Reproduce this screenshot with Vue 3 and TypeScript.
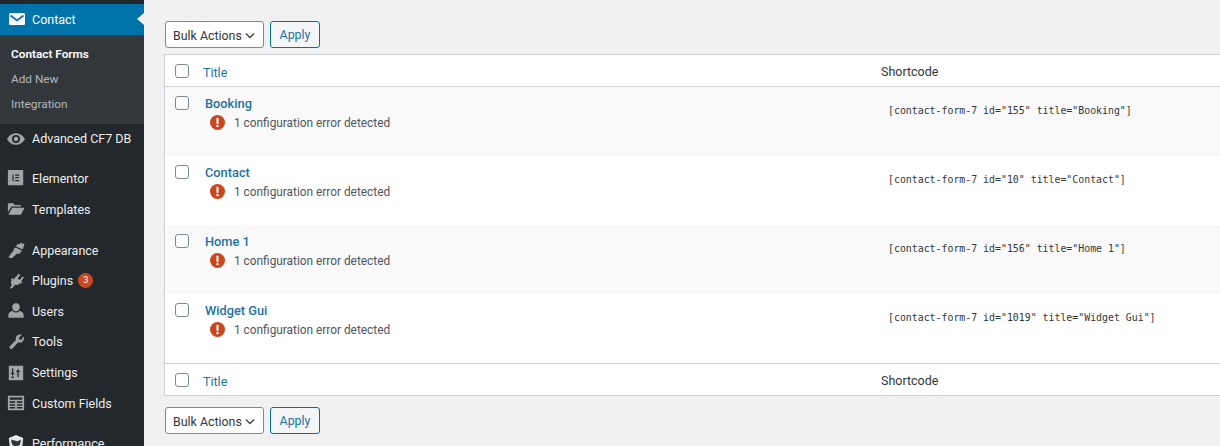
<script setup lang="ts">
const forms = [
  { title: 'Booking', code: '[contact-form-7 id="155" title="Booking"]' },
  { title: 'Contact', code: '[contact-form-7 id="10" title="Contact"]' },
  { title: 'Home 1', code: '[contact-form-7 id="156" title="Home 1"]' },
  { title: 'Widget Gui', code: '[contact-form-7 id="1019" title="Widget Gui"]' },
]
</script>

<template>
  <div class="page">
    <nav class="side">
      <div class="item current">
        <svg class="ic" viewBox="-1 0 18 18"><rect x="1" y="3" width="16" height="12" rx="1.500" fill="#fff"/><path d="M2.500 5.500L9 10.500l6.500-5" fill="none" stroke="#0073aa" stroke-width="1.700"/></svg>
        <span>Contact</span>
        <i class="notch"></i>
      </div>
      <div class="sub">
        <a class="on">Contact Forms</a>
        <a>Add New</a>
        <a>Integration</a>
      </div>
      <div class="item">
        <svg class="ic" viewBox="0 0 20 20"><path d="M10 3.500c4.300 0 7.900 2.800 10 6.500-2.100 3.700-5.700 6.500-10 6.500S2.100 13.700 0 10c2.100-3.700 5.700-6.500 10-6.500zm0 2a4.500 4.500 0 1 0 0 9 4.500 4.500 0 0 0 0-9zm0 2a2.500 2.500 0 1 1 0 5 2.500 2.500 0 0 1 0-5z" fill-rule="evenodd"/></svg>
        <span>Advanced CF7 DB</span>
      </div>
      <div class="item gap-l">
        <svg class="ic" viewBox="0 0 20 20"><path fill-rule="evenodd" d="M1 1h17v17H1zM6 6v7.500h1.300V6zm3 0v1.400h4.500V6zm0 3v1.400h4.500V9zm0 3.100v1.400h4.500v-1.400z"/></svg>
        <span>Elementor</span>
      </div>
      <div class="item">
        <svg class="ic" viewBox="0 0 20 20"><path d="M1 3.500h6l1.500 2H15.500v1.800H5L1 13.500zM5.800 8.500H19.500l-4 8H1.500z"/></svg>
        <span>Templates</span>
      </div>
      <div class="item gap">
        <svg class="ic" viewBox="0 0 20 20"><path d="M19.500 3l-2 6.500-7.500-3.500 2-3 2 .9L15.500 1l1 2zM9.500 7.300l7 3.300-2 3c-.8.700-1.800.5-2.500.2l-1.800 1-4 3.700C5 19 2.500 19 1.500 18l4-5.300 1.800-2c-.3-.8 0-1.700.5-2.200z"/></svg>
        <span>Appearance</span>
      </div>
      <div class="item">
        <svg class="ic" viewBox="0 0 20 20"><path d="M13.100 2l1.700 1.200-3 4 2.300 1.700 3-4 1.700 1.200-3.100 4.200 1.300 1-1.200 1.600-1.500-.4c-1.300 1.700-3.400 2.300-5.300 1.600L6.700 17C6 18 4.500 18.700 3 18l2.400-3.600C4.200 12.900 4 11 5 9.500l-.6-1.500 1.600-1 1.200 1z"/></svg>
        <span>Plugins</span>
        <b class="badge">3</b>
      </div>
      <div class="item">
        <svg class="ic" viewBox="0 0 20 20"><path d="M10 1.500a4.200 4.200 0 0 1 4.200 4.300c0 2.400-1.900 4.700-4.200 4.700S5.800 8.200 5.800 5.800A4.200 4.200 0 0 1 10 1.500zM6 10c1 1 2.500 1.700 4 1.700s3-.7 4-1.700c2.800.6 4.500 2.300 4.500 4.500v3h-17v-3C1.500 12.300 3.200 10.600 6 10z"/></svg>
        <span>Users</span>
      </div>
      <div class="item">
        <svg class="ic" viewBox="0 0 20 20"><path d="M18 4l.7.7c.5 2-.2 4-2 5.200-1.300.8-2.800.8-4.200.3l-6.500 7c-.8.800-2 .8-2.700 0s-.7-1.900 0-2.700L10 7.800C9.500 6.300 9.700 4.800 10.500 3.600 11.700 1.900 13.800 1.200 15.800 1.700l.5.600-3 2.800.5 2 2 .6z"/></svg>
        <span>Tools</span>
      </div>
      <div class="item">
        <svg class="ic" viewBox="0 0 20 20"><path fill-rule="evenodd" d="M2 2h16v16H2zM5.500 5v5H4l2.300 3 2.200-3H7V5zm7.500 9.500V9h1.600L12.300 5.500 10 9h1.500v5.500zM5 14v1.500h2.500V14z"/></svg>
        <span>Settings</span>
      </div>
      <div class="item">
        <svg class="ic" viewBox="0 0 20 20"><path fill-rule="evenodd" d="M1 2h18v16H1zM3 4v2.500h14V4zM3 8v2h6V8zm8 0v2h6V8zM3 11.500V13h6v-1.500zm8 0V13h6v-1.500zM3 14.500V16h6v-1.500zm8 0V16h6v-1.500z"/></svg>
        <span>Custom Fields</span>
      </div>
      <div class="item gap last">
        <svg class="ic" viewBox="0 0 20 20"><path fill="#e8e8e8" d="M10 1l8 3.500-1 9-7 5.500-7-5.500-1-9z"/><path fill="#32373c" d="M4.500 6l7 2 4-2-1 6-5 3-4-3.500z"/></svg>
        <span>Performance</span>
      </div>
    </nav>

    <main class="main">
      <div class="nav top">
        <div class="select"><span>Bulk Actions</span><svg viewBox="0 0 12 8" class="chev"><path d="M1 1.500l5 5 5-5" fill="none" stroke="#444" stroke-width="1.600"/></svg></div>
        <button class="apply">Apply</button>
      </div>

      <div class="table">
        <div class="row head">
          <span class="check"></span>
          <a class="htitle">Title</a>
          <span class="hcode">Shortcode</span>
        </div>
        <div v-for="f in forms" :key="f.title" class="row body">
          <span class="check"></span>
          <div class="cell">
            <a class="name">{{ f.title }}</a>
            <div class="err">
              <svg class="ex" viewBox="0 0 16 16"><circle cx="8" cy="8" r="8" fill="#c9471f"/><rect x="6.900" y="3" width="2.200" height="6.500" rx=".6" fill="#fff"/><circle cx="8" cy="11.800" r="1.300" fill="#fff"/></svg>
              <span>1 configuration error detected</span>
            </div>
          </div>
          <code class="code">{{ f.code }}</code>
        </div>
        <div class="row head foot">
          <span class="check"></span>
          <a class="htitle">Title</a>
          <span class="hcode">Shortcode</span>
        </div>
      </div>

      <div class="nav bottom">
        <div class="select"><span>Bulk Actions</span><svg viewBox="0 0 12 8" class="chev"><path d="M1 1.500l5 5 5-5" fill="none" stroke="#444" stroke-width="1.600"/></svg></div>
        <button class="apply">Apply</button>
      </div>
    </main>
  </div>
</template>

<style>
html, body { margin: 0; background: #f1f1f1; overflow: hidden; }
</style>

<style scoped>
.page {
  display: flex;
  width: 1220px;
  height: 446px;
  overflow: hidden;
  background: #f1f1f1;
  font-family: Roboto, "Noto Sans", sans-serif;
  font-size: 13px;
  color: #3c434a;
}
.side {
  width: 144px;
  flex: none;
  height: 446px;
  overflow: hidden;
  background: #23282d;
  padding-top: 4px;
  box-sizing: border-box;
  color: #eee;
}
.item {
  position: relative;
  display: flex;
  align-items: center;
  height: 30.600px;
  padding-left: 7px;
  gap: 7px;
  font-size: 12.500px;
  white-space: nowrap;
}
.item.current { background: #0073aa; color: #fff; }
.ic { width: 18px; height: 18px; flex: none; fill: #a0a5aa; }
.notch {
  position: absolute;
  right: 0;
  top: 9px;
  border: 6px solid transparent;
  border-right: 7px solid #f1f1f1;
  border-left-width: 0;
}
.sub {
  background: #32373c;
  display: flex;
  flex-direction: column;
  padding: 7px 0 7px 11px;
  height: 89px;
  box-sizing: border-box;
  font-size: 11.800px;
  color: #b4b9be;
}
.sub a { height: 25px; line-height: 25px; }
.sub .on { color: #fff; font-weight: 600; }
.gap { margin-top: 10.500px; }
.gap.last { margin-top: 9.500px; }
.gap-l { margin-top: 9px; }
.badge {
  width: 15px;
  height: 15px;
  border-radius: 50%;
  background: #ca4a1f;
  color: #fff;
  font-size: 9px;
  font-weight: 400;
  line-height: 15px;
  text-align: center;
  margin-left: -2px;
}
.main {
  flex: 1;
  min-width: 0;
  padding: 21px 0 0 20px;
  box-sizing: border-box;
}
.nav { display: flex; gap: 6px; margin-left: 1px; }
.top { margin-bottom: 6px; }
.bottom { margin-top: 11px; }
.select {
  width: 99px;
  height: 27px;
  box-sizing: border-box;
  border: 1px solid #7e8993;
  border-radius: 3px;
  background: #fff;
  padding: 1px 8px 0 7px;
  font-size: 12.400px;
  line-height: 25px;
  color: #32373c;
  display: flex;
  align-items: center;
  justify-content: space-between;
  white-space: nowrap;
}
.chev { width: 10px; height: 7px; }
.apply {
  width: 50px;
  height: 27px;
  box-sizing: border-box;
  border: 1px solid #0071a1;
  border-radius: 3px;
  background: #f3f5f6;
  color: #1e73a3;
  font-family: inherit;
  font-size: 12.400px;
  padding: 0;
}
.table {
  width: 1060px;
  border: 1px solid #ccd0d4;
  border-right: 0;
  background: #fff;
}
.row { display: flex; }
.check {
  width: 12px;
  height: 12px;
  box-sizing: content-box;
  border: 1px solid #7e8993;
  border-radius: 3px;
  background: #fff;
  flex: none;
  margin-left: 10px;
}
.head {
  height: 31px;
  align-items: center;
  border-bottom: 1px solid #ccd0d4;
  font-size: 12.500px;
}
.foot { border-bottom: 0; border-top: 1px solid #ccd0d4; }
.htitle { width: 678px; margin-left: 14px; color: #1e73a3; flex: none; padding-top: 3px; }
.hcode { color: #32373c; padding-top: 1px; }
.body { height: 69px; }
.body:nth-child(even) { background: #f9f9f9; }
.body .check { margin-top: 9px; }
.cell { width: 683px; flex: none; margin-left: 16px; padding-top: 8px; }
.name { display: block; color: #1e73a3; font-weight: 500; font-size: 12.800px; line-height: 18px; }
.err { display: flex; align-items: center; gap: 9px; margin: 0.500px 0 0 5px; font-size: 11.850px; line-height: 18px; color: #50575e; }
.ex { width: 15px; height: 15px; flex: none; }
.code { font-family: "DejaVu Sans Mono", monospace; font-size: 9.880px; margin-top: 17px; line-height: 14px; color: #32373c; white-space: nowrap; height: 14px; }
</style>
